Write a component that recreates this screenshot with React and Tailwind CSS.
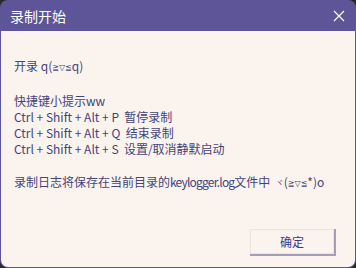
export default function App() {
  const font = { fontFamily: '"Noto Sans CJK SC", "Noto Sans", sans-serif' };
  const sym = "text-[8px] align-[1px] font-['DejaVu_Sans',sans-serif]";
  return (
    <div className="w-[356px] h-[268px] bg-[#2a2a2a]" style={font}>
      <div className="w-[356px] h-[268px] rounded-[8px] overflow-hidden flex flex-col bg-[#5d5597]">
        <div className="h-[31px] shrink-0 flex items-center justify-between pl-[10px] pr-[10px]">
          <span className="text-white text-[14px] leading-none">录制开始</span>
          <svg width="12" height="12" viewBox="0 0 12 12" className="mr-[1px]">
            <path d="M1 1 L11 11 M11 1 L1 11" stroke="white" strokeWidth="1.2" fill="none" />
          </svg>
        </div>
        <div className="flex-1 mx-[1px] mb-[1px] rounded-b-[7px] bg-[#fbf3ed] flex flex-col pl-[13px] pt-[27px] pr-[21px]">
          <div className="text-[12px] leading-[16.3px] text-[#45447a] whitespace-pre">
            <div>开录 q(<span className={sym}>≧▽≦</span>q)</div>
            <div>&nbsp;</div>
            <div>快捷键小提示ww</div>
            <div>Ctrl + Shift + Alt + P  暂停录制</div>
            <div>Ctrl + Shift + Alt + Q  结束录制</div>
            <div>Ctrl + Shift + Alt + S  设置/取消静默启动</div>
            <div>&nbsp;</div>
            <div>
              录制日志将保存在当前目录的<span className="tracking-[-0.8px]">keylogger.log</span>文件中  <span className="text-[8px] align-[1px]">ヾ</span>(<span className={sym}>≧▽≦</span>*)o
            </div>
          </div>
          <div className="flex-1" />
          <div className="flex justify-end mb-[13px]">
            <button className="w-[84px] h-[25px] bg-[#fbf3ed] border border-[#ece4da] shadow-[1px_1px_0_1px_#a49fb6] text-[12px] text-[#3b3a86] flex items-center justify-center">
              确定
            </button>
          </div>
        </div>
      </div>
    </div>
  );
}
